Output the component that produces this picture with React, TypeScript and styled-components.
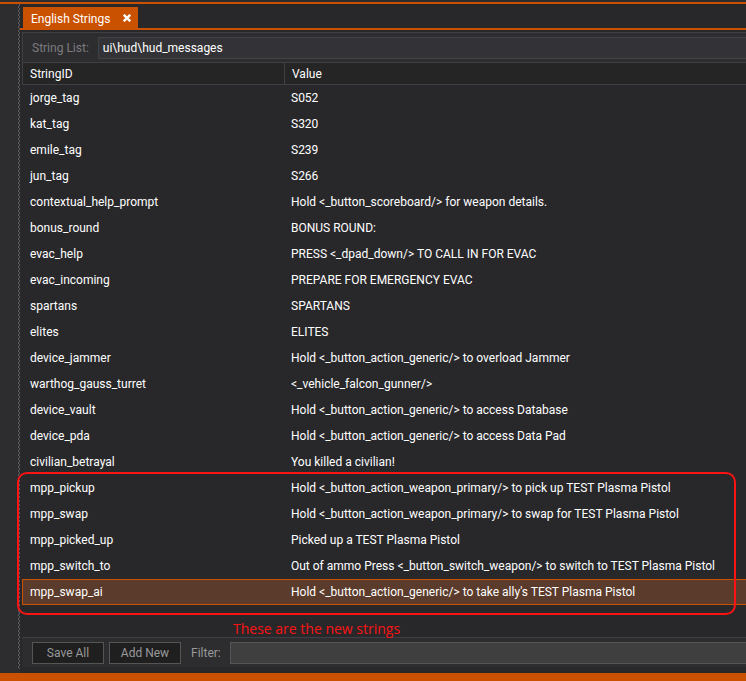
import React from 'react';
import styled, { createGlobalStyle } from 'styled-components';

const accent = '#ca5100';

const GlobalStyle = createGlobalStyle`
  * { box-sizing: border-box; }
  html, body, #root { height: 100%; margin: 0; }
  body {
    background: #2d2d30;
    color: #fff;
    font: 12px/16px Roboto, "Open Sans", sans-serif;
    overflow: hidden;
  }
  button, input { font: inherit; }
`;

const Shell = styled.div`
  display: flex;
  flex-direction: column;
  min-height: 100vh;
  padding-top: 2px;
`;

const Workspace = styled.div`
  display: flex;
  flex: 1;
  border-top: 2px solid ${accent};
`;

const Gutter = styled.div`
  width: 18px;
  background: #2d2d30;
`;

const Splitter = styled.div`
  width: 2px;
  margin-bottom: 4px;
  background:
    conic-gradient(#5b5b5f 25%, transparent 0 50%, #5b5b5f 0 75%, transparent 0) 0 0 / 2px 4px;
`;

const Main = styled.main`
  flex: 1;
  min-width: 0;
  display: flex;
  flex-direction: column;
  background: #28282b;
`;

const TabStrip = styled.div`
  display: flex;
  padding: 3px 0 0 3px;
  border-bottom: 2px solid ${accent};
`;

const Tab = styled.div`
  display: flex;
  align-items: center;
  gap: 13px;
  height: 21px;
  padding: 2px 7px 0 8px;
  background: ${accent};
`;

const CloseButton = styled.button`
  display: flex;
  padding: 0 0 2px;
  border: 0;
  background: none;
  color: #fff;
`;

const Editor = styled.section`
  flex: 1;
  display: flex;
  flex-direction: column;
  margin: 2px 0 6px 2px;
`;

const ListBar = styled.div`
  display: flex;
  align-items: center;
  gap: 9px;
  height: 30px;
  padding: 0 0 0 9px;
  border: solid #3f3f46;
  border-width: 1px 0 0 1px;
  background: #2d2d30;
`;

const Label = styled.label`
  color: #7c7c7e;
`;

const ListInput = styled.input`
  flex: 1;
  min-width: 0;
  height: 22px;
  padding: 0 4px;
  border: solid #434346;
  border-width: 1px 0 1px 1px;
  background: #333337;
  color: #fff;
`;

const Table = styled.table`
  width: 100%;
  table-layout: fixed;
  border-collapse: separate;
  border-spacing: 0;
`;

const IdColumn = styled.col`
  width: 262px;
`;

const HeadCell = styled.th`
  height: 23px;
  padding: 0 0 0 7px;
  border: solid #3f3f46;
  border-width: 1px 0 1px 1px;
  background: #252526;
  font-weight: 400;
  text-align: left;
`;

const Cell = styled.td<{ $selected?: boolean }>`
  height: 26px;
  padding: 0 0 0 7px;
  border: solid ${p => (p.$selected ? accent : 'transparent')};
  border-width: 1px 0;
  background: ${p => (p.$selected ? '#5b3b2b' : 'transparent')};
  white-space: nowrap;
  &:first-child { border-left-width: 1px; }
`;

const TableArea = styled.div`
  position: relative;
  flex: 1;
`;

const Highlight = styled.div`
  position: absolute;
  top: 410px;
  left: -5px;
  right: 10px;
  height: 143px;
  border: 2px solid #fb1313;
  border-radius: 10px;
  pointer-events: none;
`;

const Note = styled.p`
  position: absolute;
  top: 558px;
  left: 211px;
  margin: 0;
  color: #fb1313;
  font: 14px/18px "Open Sans", sans-serif;
`;

const Footer = styled.footer`
  display: flex;
  align-items: center;
  gap: 5px;
  height: 30px;
  padding-left: 10px;
  border-top: 1px solid #3f3f46;
  background: #2d2d30;
`;

const ActionButton = styled.button`
  width: 72px;
  height: 22px;
  padding: 0;
  border: 1px solid #555;
  background: #1f1f20;
  color: #999;
`;

const FilterLabel = styled.label`
  padding: 0 4px 0 5px;
  color: #999;
`;

const FilterInput = styled.input`
  flex: 1;
  min-width: 0;
  height: 22px;
  border: solid #555;
  border-width: 1px 0 1px 1px;
  background: #3f3f40;
  color: #fff;
`;

const BottomBar = styled.div`
  height: 8px;
  background: ${accent};
`;

const strings: [string, string][] = [
  ['jorge_tag', 'S052'],
  ['kat_tag', 'S320'],
  ['emile_tag', 'S239'],
  ['jun_tag', 'S266'],
  ['contextual_help_prompt', 'Hold <_button_scoreboard/> for weapon details.'],
  ['bonus_round', 'BONUS ROUND:'],
  ['evac_help', 'PRESS <_dpad_down/> TO CALL IN FOR EVAC'],
  ['evac_incoming', 'PREPARE FOR EMERGENCY EVAC'],
  ['spartans', 'SPARTANS'],
  ['elites', 'ELITES'],
  ['device_jammer', 'Hold <_button_action_generic/> to overload Jammer'],
  ['warthog_gauss_turret', '<_vehicle_falcon_gunner/>'],
  ['device_vault', 'Hold <_button_action_generic/> to access Database'],
  ['device_pda', 'Hold <_button_action_generic/> to access Data Pad'],
  ['civilian_betrayal', 'You killed a civilian!'],
  ['mpp_pickup', 'Hold <_button_action_weapon_primary/> to pick up TEST Plasma Pistol'],
  ['mpp_swap', 'Hold <_button_action_weapon_primary/> to swap for TEST Plasma Pistol'],
  ['mpp_picked_up', 'Picked up a TEST Plasma Pistol'],
  ['mpp_switch_to', 'Out of ammo Press <_button_switch_weapon/> to switch to TEST Plasma Pistol'],
  ['mpp_swap_ai', "Hold <_button_action_generic/> to take ally's TEST Plasma Pistol"],
];

export default function App() {
  return (
    <Shell>
      <GlobalStyle />
      <Workspace>
        <Gutter />
        <Splitter />
        <Main>
          <TabStrip>
            <Tab>
              <span>English Strings</span>
              <CloseButton aria-label="Close">
                <svg width="8" height="8" viewBox="0 0 8 8" stroke="currentColor" strokeWidth="2.4">
                  <path d="M0.7 0.7 7.3 7.3M7.3 0.7 0.7 7.3" />
                </svg>
              </CloseButton>
            </Tab>
          </TabStrip>
          <Editor>
            <ListBar>
              <Label htmlFor="list">String List:</Label>
              <ListInput id="list" defaultValue="ui\hud\hud_messages" />
            </ListBar>
            <TableArea>
              <Table>
                <colgroup>
                  <IdColumn />
                  <col />
                </colgroup>
                <thead>
                  <tr>
                    <HeadCell>StringID</HeadCell>
                    <HeadCell>Value</HeadCell>
                  </tr>
                </thead>
                <tbody>
                  {strings.map(([id, value]) => (
                    <tr key={id}>
                      <Cell $selected={id === 'mpp_swap_ai'}>{id}</Cell>
                      <Cell $selected={id === 'mpp_swap_ai'}>{value}</Cell>
                    </tr>
                  ))}
                </tbody>
              </Table>
              <Highlight />
              <Note>These are the new strings</Note>
            </TableArea>
            <Footer>
              <ActionButton>Save All</ActionButton>
              <ActionButton>Add New</ActionButton>
              <FilterLabel htmlFor="filter">Filter:</FilterLabel>
              <FilterInput id="filter" />
            </Footer>
          </Editor>
        </Main>
      </Workspace>
      <BottomBar />
    </Shell>
  );
}
